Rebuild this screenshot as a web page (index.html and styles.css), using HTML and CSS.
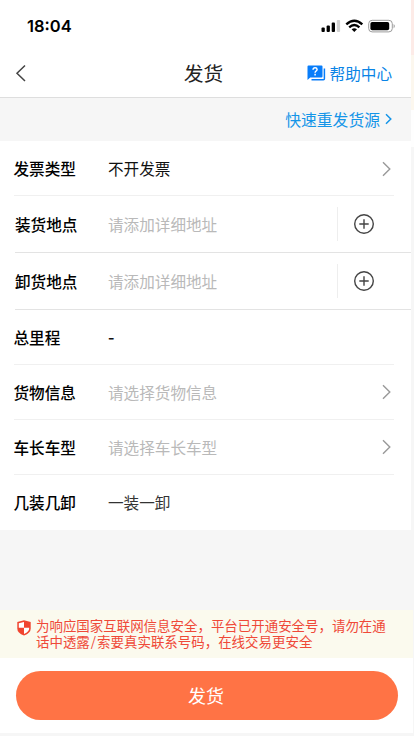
FILE: index.html
```html
<!DOCTYPE html>
<html lang="zh-CN">
<head>
<meta charset="utf-8">
<title>发货</title>
<link rel="stylesheet" href="styles.css">
</head>
<body>
<div class="upper">
<main class="app">
  <div class="status">
    <span class="time">18:04</span>
    <svg class="status-icons" width="76" height="16" viewBox="0 0 76 16">
      <rect x="0.5" y="9.500" width="3.300" height="4.500" rx="1"/>
      <rect x="5.600" y="7.500" width="3.300" height="6.500" rx="1"/>
      <rect x="10.700" y="4.500" width="3.300" height="9.500" rx="1"/>
      <rect x="15.800" y="2" width="3.300" height="12" rx="1" fill="#d2d2d2"/>
      <g fill="none" stroke="#000" stroke-width="2.400"><path d="M25.300 6.300Q33.300-.9 41.300 6.300"/><path d="M28.200 9.300Q33.300 4.900 38.400 9.300"/></g>
      <path d="M30.600 11.300q2.700-2 5.400 0L33.300 14z"/>
      <rect x="47.700" y="2.300" width="23.600" height="11.600" rx="3.400" fill="none" stroke="#9c9c9c"/>
      <rect x="49.400" y="4" width="18.800" height="8.200" rx="1.800"/>
      <path d="M72.600 6q2.400 2 0 4.400z" fill="#999"/>
    </svg>
  </div>
  <header class="nav">
    <svg class="back" width="12" height="18" viewBox="0 0 12 18"><path d="M10 1.500 2 9.300 10 17"/></svg>
    <h1>发货</h1>
    <a class="help">
      <svg width="19" height="17" viewBox="0 0 19 17">
        <path d="M1.500.5h13q1 0 1 1v10q0 1-1 1H3.200L.5 15V1.500q0-1 1-1z" fill="#087dfa"/>
        <path d="M17.400 3.500v10.300q0 1-1 1H4.500" fill="none" stroke="#087dfa" stroke-width="1.500"/>
        <path d="M6 4.800q.2-2 2.100-2t2 1.700c0 1.500-2 1.500-2 3.200M8.100 8.800v1.600" fill="none" stroke="#fff" stroke-width="1.500"/>
      </svg>
      <span>帮助中心</span>
    </a>
  </header>
  <div class="quick"><span>快速重发货源</span><svg width="7" height="12" viewBox="0 0 7 12"><path d="M1 1.200 5.800 6 1 10.800"/></svg></div>
  <section class="form">
    <div class="row"><label>发票类型</label><span class="value">不开发票</span><svg class="arrow" width="9" height="16" viewBox="0 0 9 16"><path d="M1 1.300 7.800 8 1 14.700"/></svg></div>
    <div class="row place"><label>装货地点</label><span class="hint">请添加详细地址</span><span class="add"><svg width="22" height="22" viewBox="0 0 22 22"><circle cx="11" cy="11" r="9.300"/><path d="M6.300 11h9.400M11 6.300v9.400"/></svg></span></div>
    <div class="row place"><label>卸货地点</label><span class="hint">请添加详细地址</span><span class="add"><svg width="22" height="22" viewBox="0 0 22 22"><circle cx="11" cy="11" r="9.300"/><path d="M6.300 11h9.400M11 6.300v9.400"/></svg></span></div>
    <div class="row"><label>总里程</label><span class="value dash">-</span></div>
    <div class="row"><label>货物信息</label><span class="hint">请选择货物信息</span><svg class="arrow" width="9" height="16" viewBox="0 0 9 16"><path d="M1 1.300 7.800 8 1 14.700"/></svg></div>
    <div class="row"><label>车长车型</label><span class="hint">请选择车长车型</span><svg class="arrow" width="9" height="16" viewBox="0 0 9 16"><path d="M1 1.300 7.800 8 1 14.700"/></svg></div>
    <div class="row last"><label>几装几卸</label><span class="value soft">一装一卸</span></div>
  </section>
</main>
<div class="edge"></div>
</div>
<footer class="footer">
  <div class="notice">
    <svg width="14" height="16" viewBox="0 0 14 16">
      <path d="M7 .3 13.700 2v6.500q0 4.700-6.700 7-6.700-2.300-6.700-7V2z" fill="#f0442f"/>
      <path d="M7 2v5.800H1.800V3.200zM7 7.800h5.200q.3 4-5.200 6.200z" fill="#fff"/>
    </svg>
    <p>为响应国家互联网信息安全，平台已开通安全号，请勿在通<br>话中透露<span class="slash">/</span>索要真实联系号码，在线交易更安全</p>
  </div>
  <div class="action"><button>发货</button></div>
</footer>
</body>
</html>
```

FILE: styles.css
```css
* { box-sizing: border-box; }
body {
  margin: 0;
  width: 414px;
  height: 736px;
  overflow: hidden;
  background: #f6f6f6;
  font-family: "Noto Sans CJK SC", sans-serif;
  font-size: 15.6px;
  color: #111;
}
svg { display: block; flex: none; }
.upper { display: flex; height: 610px; }
.app { width: 411px; }
.edge {
  width: 3px;
  background: linear-gradient(#fdebe7 0 55px, #fcf7ee 55px 110px, #fefefe 110px 147px, #f6f6f6 147px);
}
.status {
  height: 50px;
  padding: 1px 14px 0 27px;
  display: flex;
  align-items: center;
  justify-content: space-between;
  background: #fff;
}
.time { font: 600 16.500px Inter, sans-serif; color: #000; }
.nav {
  height: 48px;
  padding: 0 19px 2px 15px;
  display: grid;
  grid-template-columns: 1fr auto 1fr;
  align-items: center;
  background: #fff;
  border-bottom: 1px solid #dedede;
}
.back { margin-top: 1px; }
.back path { fill: none; stroke: #444; stroke-width: 1.500; }
h1 { margin: 0; font-size: 19.800px; font-weight: 400; line-height: 28px; color: #222; }
.help { display: flex; align-items: center; justify-content: flex-end; gap: 4px; color: #0a84e6; white-space: nowrap; }
.help svg { margin-top: 1px; }
.quick {
  height: 43px;
  padding: 0 19px 1px 0;
  display: flex;
  align-items: center;
  justify-content: flex-end;
  gap: 5px;
  color: #1495e8;
}
.quick span { font-size: 15.800px; }
.quick path { fill: none; stroke: #1495e8; stroke-width: 1.500; }
.form { background: #fff; padding-left: 13.500px; }
.row {
  height: 55px;
  margin-right: 17px;
  padding: 0 3px 1px 0;
  display: flex;
  align-items: center;
  border-bottom: 1px solid #f0f0f0;
}
.row:first-child { padding-bottom: 0; }
.row label { width: 94.500px; font-weight: 500; color: #000; }
.value { color: #111; }
.dash { font-size: 18px; font-weight: 500; line-height: 20px; margin-bottom: 2px; }
.soft { color: #333; }
.hint { color: #b9b9b9; }
.arrow { margin: 1px 0 0 auto; }
.arrow path { fill: none; stroke: #999; stroke-width: 1.400; }
.place { height: 57px; margin: 0 0 0 1.500px; padding-right: 36px; border-color: #e3e3e3; }
.place label { width: 93px; }
.add { margin-left: auto; height: 34px; padding-left: 15px; display: flex; align-items: center; border-left: 1px solid #eee; }
.add svg { fill: none; stroke: #444; stroke-width: 1.400; }
.last { border: 0; padding-bottom: 2px; }
.footer { width: 413px; height: 123px; background: #fff; }
.notice {
  height: 48px;
  padding: 7px 0 0 17px;
  display: flex;
  gap: 5px;
  background: #fbfaee;
  color: #ef4938;
}
.notice svg { margin-top: 3px; }
.notice p { margin: 0; font-size: 13.460px; line-height: 16px; white-space: nowrap; }
.slash { padding: 0 1px; }
.action { padding: 13px 15px 0 16px; }
button {
  display: block;
  width: 100%;
  height: 49px;
  padding: 0 2px 2px 0;
  border: 0;
  border-radius: 25px;
  background: #ff7345;
  color: #fff;
  font: 400 18px "Noto Sans CJK SC", sans-serif;
}
```
